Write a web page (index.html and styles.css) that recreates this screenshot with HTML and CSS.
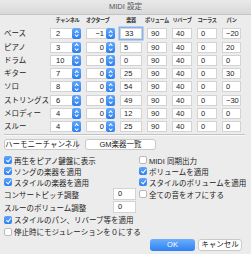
FILE: index.html
```html
<!DOCTYPE html>
<html lang="ja">
<head>
	<meta charset="UTF-8">
	<title>MIDI 設定</title>
	<link rel="stylesheet" href="styles.css">
</head>
<body>
	<div class="win">
		<div class="titlebar">MIDI 設定</div>

		<div class="mixer">
			<div></div>
			<div class="hd hd-ch">チャンネル</div>
			<div class="hd hd-oct">オクターブ</div>
			<div class="hd">楽器</div>
			<div class="hd">ボリューム</div>
			<div class="hd">リバーブ</div>
			<div class="hd">コーラス</div>
			<div class="hd">パン</div>

			<div class="lbl">ベース</div>
			<div class="spin ch"><span class="fld">2</span><span class="arr"></span></div>
			<div class="spin oct"><span class="fld">−1</span><span class="arr"></span></div>
			<div class="box focus">33</div><div class="box">90</div><div class="box">40</div><div class="box">0</div><div class="box">−20</div>

			<div class="lbl">ピアノ</div>
			<div class="spin ch"><span class="fld">3</span><span class="arr"></span></div>
			<div class="spin oct"><span class="fld">0</span><span class="arr"></span></div>
			<div class="box">5</div><div class="box">90</div><div class="box">40</div><div class="box">0</div><div class="box">20</div>

			<div class="lbl">ドラム</div>
			<div class="spin ch"><span class="fld">10</span><span class="arr"></span></div>
			<div class="spin oct"><span class="fld">0</span><span class="arr"></span></div>
			<div class="box">0</div><div class="box">90</div><div class="box">40</div><div class="box">0</div><div class="box">0</div>

			<div class="lbl">ギター</div>
			<div class="spin ch"><span class="fld">7</span><span class="arr"></span></div>
			<div class="spin oct"><span class="fld">0</span><span class="arr"></span></div>
			<div class="box">25</div><div class="box">90</div><div class="box">40</div><div class="box">0</div><div class="box">30</div>

			<div class="lbl">ソロ</div>
			<div class="spin ch"><span class="fld">8</span><span class="arr"></span></div>
			<div class="spin oct"><span class="fld">0</span><span class="arr"></span></div>
			<div class="box">54</div><div class="box">90</div><div class="box">40</div><div class="box">0</div><div class="box">0</div>

			<div class="lbl">ストリングス</div>
			<div class="spin ch"><span class="fld">6</span><span class="arr"></span></div>
			<div class="spin oct"><span class="fld">0</span><span class="arr"></span></div>
			<div class="box">49</div><div class="box">90</div><div class="box">40</div><div class="box">0</div><div class="box">−30</div>

			<div class="lbl">メロディー</div>
			<div class="spin ch"><span class="fld">4</span><span class="arr"></span></div>
			<div class="spin oct"><span class="fld">0</span><span class="arr"></span></div>
			<div class="box">12</div><div class="box">90</div><div class="box">40</div><div class="box">0</div><div class="box">0</div>

			<div class="lbl">スルー</div>
			<div class="spin ch"><span class="fld">4</span><span class="arr"></span></div>
			<div class="spin oct"><span class="fld">0</span><span class="arr"></span></div>
			<div class="box">25</div><div class="box">90</div><div class="box">40</div><div class="box">0</div><div class="box">0</div>
		</div>

		<div class="sep"></div>

		<div class="tools">
			<button class="btn b-harm">ハーモニーチャンネル</button>
			<button class="btn b-gm">GM楽器一覧</button>
		</div>

		<div class="opts">
			<div class="opt"><span class="cb on"></span>再生をピアノ鍵盤に表示</div>
			<div class="opt"><span class="cb"></span>MIDI 同期出力</div>
			<div class="opt"><span class="cb on"></span>ソングの楽器を適用</div>
			<div class="opt"><span class="cb on"></span>ボリュームを適用</div>
			<div class="opt"><span class="cb on"></span>スタイルの楽器を適用</div>
			<div class="opt"><span class="cb on"></span>スタイルのボリュームを適用</div>
			<div class="opt field"><span class="flex">コンサートピッチ調整</span><span class="inp">0</span></div>
			<div class="opt"><span class="cb"></span>全ての音をオフにする</div>
			<div class="opt field"><span class="flex">スルーのボリューム調整</span><span class="inp">0</span></div>
			<div></div>
			<div class="opt wide"><span class="cb on"></span>スタイルのパン、リバーブ等を適用</div>
			<div class="opt wide"><span class="cb"></span>停止時にモジュレーションを０にする</div>
		</div>

		<div class="actions">
			<button class="btn ok">OK</button>
			<button class="btn cancel">キャンセル</button>
		</div>
	</div>
</body>
</html>
```

FILE: styles.css
```css
* { margin:0; padding:0; box-sizing:border-box; }
body { background:#ececec; font-family:"Liberation Sans", "Noto Sans CJK JP", sans-serif; font-size:7.5px; color:#222; width:251px; height:254px; overflow:hidden; }

.win { width:251px; height:254px; }
.titlebar { height:15px; line-height:14px; text-align:center; color:#555; background:linear-gradient(#e9e9e9, #d9d9d9); border-bottom:1px solid #c3c3c3; }

/* mixer table */
.mixer { display:grid; grid-template-columns:41px 31px 29px 22px 20px 20px 20px 19px; column-gap:5px; grid-auto-rows:11px; row-gap:2.3px; padding-left:4px; }
.hd { font-size:5.2px; font-weight:bold; line-height:11px; letter-spacing:-0.4px; text-align:center; color:#333; white-space:nowrap; display:flex; justify-content:center; }
.hd-ch { padding-left:4px; }
.hd-oct { justify-content:flex-start; }
.lbl { line-height:11px; white-space:nowrap; }

.spin { display:flex; height:11px; }
.spin .fld { flex:1; background:#fff; border:1px solid #d3d3d3; border-right:none; line-height:9px; }
.ch .fld { padding-left:5px; }
.oct .fld { text-align:right; padding-right:2px; }
.arr { width:9px; border-radius:2px; background:linear-gradient(#64a8fb, #2c7ff2); position:relative; }
.arr::before, .arr::after { content:""; position:absolute; left:3px; width:2.4px; height:2.4px; border:solid #fff; border-width:1px 0 0 1px; transform:rotate(45deg); }
.arr::before { top:2.6px; }
.arr::after { top:5.2px; transform:rotate(225deg); }

.box { background:#fff; border:1px solid #d3d3d3; height:11px; line-height:9px; padding-left:3px; }
.box.focus { padding-left:4px; box-shadow:0 0 0 1.5px #86b3ee; }

.sep { height:1px; background:#c4c4c4; border-bottom:1px solid #f8f8f8; margin:2px 6px 0 4px; box-sizing:content-box; }

.btn { font-family:inherit; font-size:7.5px; color:#222; background:#fff; border:1px solid #c9c9c9; border-radius:3px; height:11px; line-height:9px; padding:0; white-space:nowrap; }
.tools { display:flex; gap:7px; padding-left:4px; margin-top:3px; }
.b-harm { width:74px; }
.b-gm { width:71px; }

/* options */
.opts { display:grid; grid-template-columns:135px 1fr; grid-template-rows:11px 11px 11px 13px 13px 12px 12px; padding-left:4px; margin-top:4.5px; }
.opt { display:flex; align-items:center; white-space:nowrap; }
.opt.wide { grid-column:span 2; }
.cb { width:8px; height:8px; border:1px solid #b9b9b9; border-radius:2px; background:#fff; margin-right:2px; position:relative; flex:none; }
.cb.on { border:none; background:linear-gradient(#5fa5fa, #2c7ff2); }
.cb.on::after { content:""; position:absolute; left:2.6px; top:0.8px; width:2px; height:4.4px; border:solid #fff; border-width:0 1.2px 1.2px 0; transform:rotate(40deg); }
.field .flex { flex:1; }
.inp { width:23px; height:12px; background:#fff; border:1px solid #d3d3d3; line-height:10px; padding-left:4px; margin-right:3px; }

.actions { display:flex; justify-content:flex-end; gap:3px; padding-right:9px; margin-top:1.5px; }
.actions .btn { height:12px; line-height:10px; }
.ok { width:45px; border:none; color:#fff; background:linear-gradient(#6aaefb, #2f80f2); }
.cancel { width:44px; }
```
